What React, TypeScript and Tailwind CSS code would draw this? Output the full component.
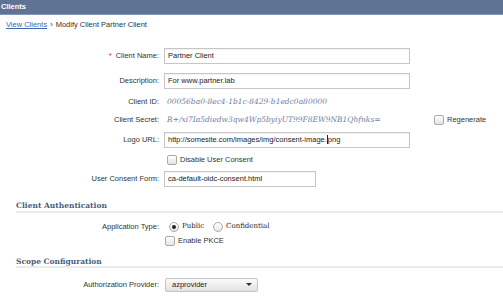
import React from "react";

const sans = { fontFamily: '"Liberation Sans", Arial, sans-serif' };
const serif = { fontFamily: '"DejaVu Serif", "Liberation Serif", serif' };

function Checkbox() {
  return (
    <span className="inline-block w-[10px] h-[10px] rounded-[2px] border border-[#a9a9a9] bg-gradient-to-b from-[#ffffff] to-[#e4e4e4] shrink-0" />
  );
}

function Radio({ checked }: { checked?: boolean }) {
  return (
    <span className="inline-flex items-center justify-center w-[10px] h-[10px] rounded-full border border-[#a9a9a9] bg-gradient-to-b from-[#ffffff] to-[#e6e6e6] shrink-0">
      {checked && <span className="block w-[4px] h-[4px] rounded-full bg-[#222]" />}
    </span>
  );
}

function Label({ children, req }: { children: React.ReactNode; req?: boolean }) {
  return (
    <div className="w-[160px] shrink-0 text-right text-[#333] pr-[1px]">
      {req && <span className="text-[#e02020] mr-[4px]">*</span>}
      {children}
    </div>
  );
}

function Input({ value, w, cursorAfter }: { value: string; w: string; cursorAfter?: string }) {
  return (
    <div className={`${w} h-[16px] border border-[#c6c6c6] bg-white shadow-[inset_0_1px_1px_rgba(0,0,0,0.06)] flex items-center px-[3px] text-[#222] ml-[4px]`}>
      {cursorAfter ? (
        <span>
          {value}
          <span className="inline-block w-[1px] h-[9px] bg-[#222] align-middle -mt-[1px]" />
          {cursorAfter}
        </span>
      ) : (
        value
      )}
    </div>
  );
}

function SectionHeading({ children }: { children: React.ReactNode }) {
  return (
    <div className="ml-[16px] border-b-2 border-[#ececec] pb-[1px] text-[#4a5d7e] font-bold text-[7.5px]" style={serif}>
      {children}
    </div>
  );
}

export default function App() {
  return (
    <div className="w-[503px] h-[300px] bg-white overflow-hidden text-[7.5px] leading-none" style={sans}>
      <div className="h-[15px] bg-[#5f7394] border-b border-[#8497b4] flex items-center pl-[1px] text-white font-bold text-[7.5px]">
        Clients
      </div>
      <div className="h-[16px] flex items-center pl-[6px] mt-[2px] text-[#333]">
        <span className="text-[#3f66a8] underline">View Clients</span>
        <span className="mx-[3px]">›</span>
        <span>Modify Client Partner Client</span>
      </div>

      <div className="mt-[15px] flex flex-col">
        <div className="flex items-center h-[16px]">
          <Label req>Client Name:</Label>
          <Input value="Partner Client" w="w-[246px]" />
        </div>
        <div className="flex items-center h-[16px] mt-[9px]">
          <Label>Description:</Label>
          <Input value="For www.partner.lab" w="w-[246px]" />
        </div>
        <div className="flex items-center h-[18px] mt-[4px]">
          <Label>Client ID:</Label>
          <span className="ml-[7px] italic text-[#6d80a6]" style={serif}>
            00056ba0-8ec4-1b1c-8429-b1edc0a80000
          </span>
        </div>
        <div className="flex items-center h-[17px]">
          <Label>Client Secret:</Label>
          <span className="ml-[7px] italic text-[#6d80a6] w-[267px]" style={serif}>
            R+/xi7Ia5diedw3qw4Wp5byiyUT99F8EW9NB1Qhfnks=
          </span>
          <span className="flex items-center gap-[3px] text-[#333]">
            <Checkbox />
            Regenerate
          </span>
        </div>
        <div className="flex items-center h-[16px] mt-[4px]">
          <Label>Logo URL:</Label>
          <Input value="http://somesite.com/images/img/consent-image." cursorAfter="png" w="w-[246px]" />
        </div>
        <div className="flex items-center h-[19px] mt-[2px] pl-[167px] gap-[3px] text-[#333]">
          <Checkbox />
          Disable User Consent
        </div>
        <div className="flex items-center h-[16px] mt-[2px]">
          <Label>User Consent Form:</Label>
          <Input value="ca-default-oidc-consent.html" w="w-[152px]" />
        </div>
      </div>

      <div className="mt-[15px]">
        <SectionHeading>Client Authentication</SectionHeading>
      </div>
      <div className="flex items-center h-[14px] mt-[7px]">
        <Label>Application Type:</Label>
        <span className="ml-[9px] flex items-center gap-[3px] text-[#222] text-[7px]" style={serif}>
          <Radio checked />
          Public
          <span className="ml-[3px]" />
          <Radio />
          Confidential
        </span>
      </div>
      <div className="flex items-center h-[14px] pl-[165px] gap-[3px] text-[#333]">
        <Checkbox />
        Enable PKCE
      </div>

      <div className="mt-[10px]">
        <SectionHeading>Scope Configuration</SectionHeading>
      </div>
      <div className="flex items-center h-[15px] mt-[9px]">
        <Label>Authorization Provider:</Label>
        <div className="ml-[5px] w-[93px] h-[14px] rounded-[2px] border border-[#c4c4c4] bg-gradient-to-b from-[#fbfbfb] to-[#e2e2e2] flex items-center justify-between pl-[6px] pr-[5px] text-[#222]">
          azprovider
          <span className="w-0 h-0 border-l-[3px] border-r-[3px] border-t-[3px] border-l-transparent border-r-transparent border-t-[#333]" />
        </div>
      </div>
    </div>
  );
}
